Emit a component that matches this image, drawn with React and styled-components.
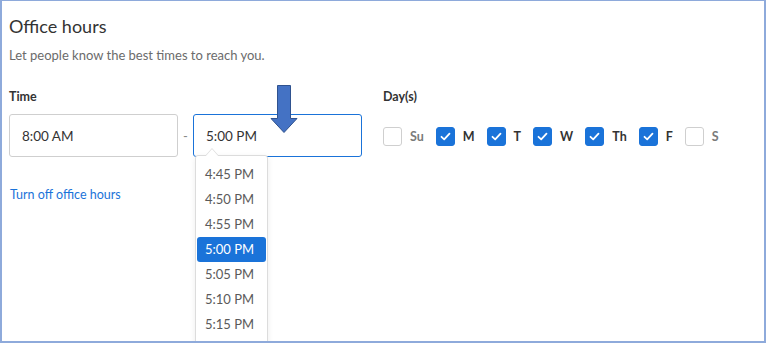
import React from 'react'
import styled, {createGlobalStyle} from 'styled-components'

const GlobalStyle = createGlobalStyle`
    body {
        margin: 0;
        background: #ffffff;
        font-family: Lato, "Open Sans", sans-serif;
    }
`

const blue = '#1a73d9'

const times = ['4:45 PM', '4:50 PM', '4:55 PM', '5:00 PM', '5:05 PM', '5:10 PM', '5:15 PM']

const days = [
    {name: 'Su', on: false},
    {name: 'M', on: true},
    {name: 'T', on: true},
    {name: 'W', on: true},
    {name: 'Th', on: true},
    {name: 'F', on: true},
    {name: 'S', on: false},
]

const App = () => {
    return (
        <>
            <GlobalStyle />
            <Frame>
                <Title>Office hours</Title>
                <Subtitle>Let people know the best times to reach you.</Subtitle>
                <Fields>
                    <TimeGroup>
                        <Label>Time</Label>
                        <TimeRow>
                            <TimeInput>8:00 AM</TimeInput>
                            <Dash>-</Dash>
                            <TimeField>
                                <TimeInput $focused>5:00 PM</TimeInput>
                                <Dropdown>
                                    {times.map((t) => (
                                        <Option key={t} $selected={t === '5:00 PM'}>{t}</Option>
                                    ))}
                                </Dropdown>
                                <Pointer width="28" height="49" viewBox="0 0 28 49">
                                    <path d="M7.5 0.5 H20.5 V33.5 H27 L14 47.5 L1 33.5 H7.5 Z" fill="#4472c4" stroke="#2f528f" strokeWidth="1" />
                                </Pointer>
                            </TimeField>
                        </TimeRow>
                        <TurnOff>Turn off office hours</TurnOff>
                    </TimeGroup>
                    <DayGroup>
                        <Label>Day(s)</Label>
                        <DayRow>
                            {days.map((d) => (
                                <Day key={d.name}>
                                    <Box $on={d.on}>
                                        {d.on && (
                                            <svg width="11" height="9" viewBox="0 0 11 9">
                                                <path d="M1.5 4.8 L4.2 7.3 L9.5 1.6" fill="none" stroke="#fff" strokeWidth="1.8" strokeLinecap="round" strokeLinejoin="round" />
                                            </svg>
                                        )}
                                    </Box>
                                    <DayName $on={d.on}>{d.name}</DayName>
                                </Day>
                            ))}
                        </DayRow>
                    </DayGroup>
                </Fields>
            </Frame>
        </>
    )
}
export default App

const Frame = styled.div`
    width: 766px;
    height: 343px;
    box-sizing: border-box;
    border: 2px solid #8eaadb;
    border-top-width: 1px;
    padding: 13px 0 0 7px;
    overflow: hidden;
    position: relative;
    background: #fff;
`

const Title = styled.div`
    font-size: 18px;
    line-height: 24px;
    color: #333;
`

const Subtitle = styled.div`
    margin-top: 8px;
    font-size: 13px;
    line-height: 18px;
    color: #6b6b6b;
`

const Fields = styled.div`
    display: flex;
    gap: 21px;
    margin-top: 25px;
`

const TimeGroup = styled.div`
    display: flex;
    flex-direction: column;
`

const Label = styled.div`
    font-size: 12.5px;
    line-height: 16px;
    font-weight: 700;
    color: #333;
`

const TimeRow = styled.div`
    display: flex;
    align-items: center;
    margin-top: 9px;
`

const TimeField = styled.div`
    position: relative;
`

const TimeInput = styled.div`
    width: 169px;
    height: 43px;
    box-sizing: border-box;
    border: 1px solid ${(p) => (p.$focused ? blue : '#cfcfcf')};
    border-radius: 3px;
    padding-left: 12px;
    display: flex;
    align-items: center;
    font-size: 13.5px;
    color: #333;
    background: #fff;
`

const Dash = styled.span`
    width: 15px;
    text-align: center;
    font-size: 13px;
    color: #888;
`

const Dropdown = styled.div`
    position: absolute;
    left: 2px;
    top: 41px;
    width: 73px;
    box-sizing: border-box;
    padding: 6px 1px 30px;
    background: #fff;
    border: 1px solid #dcdcdc;
    border-radius: 3px;
    box-shadow: 0 2px 6px rgba(0, 0, 0, 0.08);
    z-index: 2;

    &::before, &::after {
        content: '';
        position: absolute;
        left: 9px;
        width: 0;
        height: 0;
        border-left: 7px solid transparent;
        border-right: 7px solid transparent;
    }
    &::before {
        top: -8px;
        border-bottom: 8px solid #dcdcdc;
    }
    &::after {
        top: -7px;
        border-bottom: 8px solid #fff;
    }
`

const Option = styled.div`
    height: 25px;
    line-height: 25px;
    padding-left: 8px;
    border-radius: 3px;
    font-size: 13px;
    color: ${(p) => (p.$selected ? '#fff' : '#5a5a5a')};
    background: ${(p) => (p.$selected ? blue : 'transparent')};
`

const Pointer = styled.svg`
    position: absolute;
    left: 77px;
    top: -29px;
    z-index: 3;
`

const TurnOff = styled.a`
    margin-top: 30px;
    padding-left: 1px;
    font-size: 12.5px;
    line-height: 16px;
    color: ${blue};
    cursor: pointer;
`

const DayGroup = styled.div`
    display: flex;
    flex-direction: column;
`

const DayRow = styled.div`
    display: flex;
    align-items: center;
    gap: 12px;
    margin-top: 22px;
`

const Day = styled.label`
    display: flex;
    align-items: center;
    gap: 8px;
`

const Box = styled.span`
    width: 19px;
    height: 19px;
    box-sizing: border-box;
    border-radius: 3px;
    border: 1px solid ${(p) => (p.$on ? blue : '#cfcfcf')};
    background: ${(p) => (p.$on ? blue : '#fff')};
    display: flex;
    align-items: center;
    justify-content: center;
`

const DayName = styled.span`
    font-size: 12.5px;
    font-weight: 700;
    color: ${(p) => (p.$on ? '#333' : '#7a7a7a')};
`
